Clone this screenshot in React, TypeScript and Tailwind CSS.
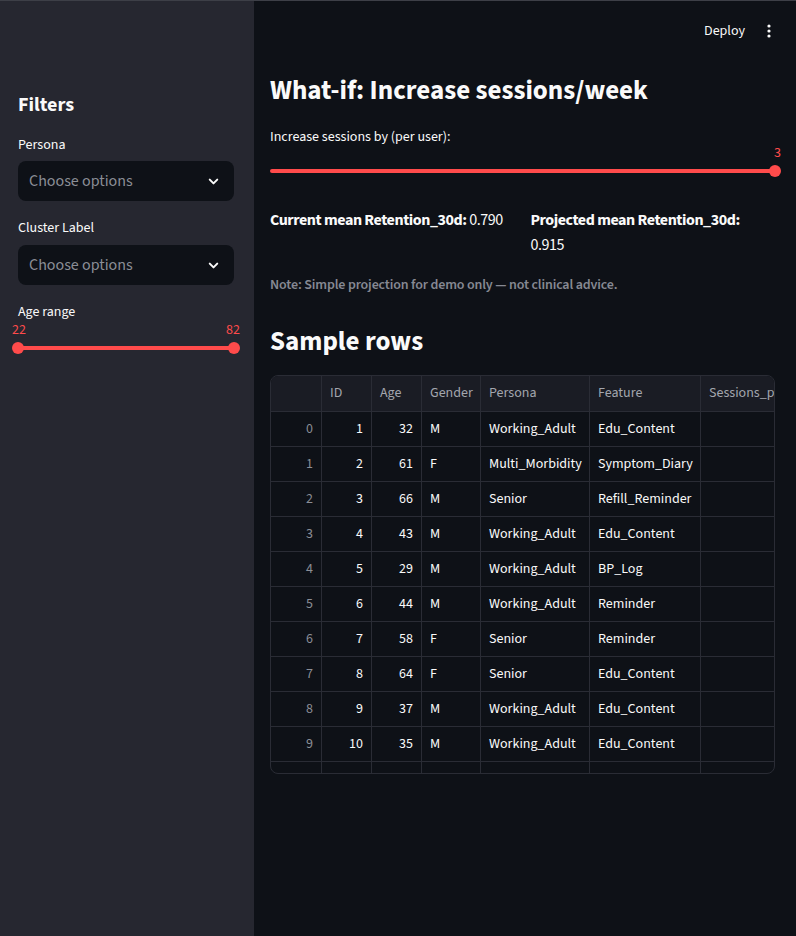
import React from "react";

const rows = [
  [0, 1, 32, "M", "Working_Adult", "Edu_Content"],
  [1, 2, 61, "F", "Multi_Morbidity", "Symptom_Diary"],
  [2, 3, 66, "M", "Senior", "Refill_Reminder"],
  [3, 4, 43, "M", "Working_Adult", "Edu_Content"],
  [4, 5, 29, "M", "Working_Adult", "BP_Log"],
  [5, 6, 44, "M", "Working_Adult", "Reminder"],
  [6, 7, 58, "F", "Senior", "Reminder"],
  [7, 8, 64, "F", "Senior", "Edu_Content"],
  [8, 9, 37, "M", "Working_Adult", "Edu_Content"],
  [9, 10, 35, "M", "Working_Adult", "Edu_Content"],
];

const cols = "grid grid-cols-[51px_50px_50px_59px_109px_111px_1fr]";

function Select() {
  return (
    <div className="h-10 rounded-lg bg-[#0e1117] flex items-center justify-between pl-[11px] pr-[13px]">
      <span className="text-[16px] text-[#8b8e96]">Choose options</span>
      <svg width="15" height="15" viewBox="0 0 24 24" fill="none" stroke="#fafafa" strokeWidth="3.2" strokeLinecap="round" strokeLinejoin="round">
        <path d="M6 9l6 6 6-6" />
      </svg>
    </div>
  );
}

export default function App() {
  return (
    <div className="w-[796px] h-[936px] flex bg-[#0e1117] text-[#fafafa] border-t border-[#3d3f47] overflow-hidden" style={{ fontFamily: "'Source Sans 3', Lato, 'Noto Sans', sans-serif" }}>
      {/* Sidebar */}
      <div className="w-[254px] shrink-0 bg-[#262730] pl-[18px] pr-[20px] pt-[91px]">
        <div className="text-[20px] font-bold leading-[26px]">Filters</div>
        <div className="mt-[18px] text-[14px] leading-[18px]">Persona</div>
        <div className="mt-[7px]"><Select /></div>
        <div className="mt-[18px] text-[14px] leading-[18px]">Cluster Label</div>
        <div className="mt-[8px]"><Select /></div>
        <div className="mt-[18px] text-[14px] leading-[18px]">Age range</div>
        <div className="relative h-[36px]">
          <span className="absolute left-[-6px] top-[1px] text-[14px] leading-[16px] text-[#ff4b4b]">22</span>
          <span className="absolute right-[-6px] top-[1px] text-[14px] leading-[16px] text-[#ff4b4b]">82</span>
          <div className="absolute left-0 right-0 top-[25px] h-1 rounded bg-[#ff4b4b]" />
          <div className="absolute left-[-6px] top-[21px] w-3 h-3 rounded-full bg-[#ff4b4b]" />
          <div className="absolute right-[-6px] top-[21px] w-3 h-3 rounded-full bg-[#ff4b4b]" />
        </div>
      </div>

      {/* Main */}
      <div className="flex-1 pl-[16px] pr-[21px]">
        <div className="h-[60px] flex items-center justify-end gap-[22px]">
          <span className="text-[14px]">Deploy</span>
          <svg width="4" height="14" viewBox="0 0 4 14" fill="#fafafa" className="mr-[4px]">
            <circle cx="2" cy="2" r="1.6" />
            <circle cx="2" cy="7" r="1.6" />
            <circle cx="2" cy="12" r="1.6" />
          </svg>
        </div>
        <h2 className="mt-[12px] text-[27px] font-bold leading-[36px]">What-if: Increase sessions/week</h2>
        <div className="mt-[19px] text-[14px] leading-[18px]">Increase sessions by (per user):</div>
        <div className="relative h-[30px] mt-[2px]">
          <span className="absolute right-[-6px] top-[-3px] text-[14px] leading-[16px] text-[#ff4b4b]">3</span>
          <div className="absolute left-0 right-0 top-[21px] h-1 rounded bg-[#ff4b4b]" />
          <div className="absolute right-[-6px] top-[17px] w-3 h-3 rounded-full bg-[#ff4b4b]" />
        </div>
        <div className="mt-[30px] grid grid-cols-2 gap-4 text-[16px] leading-[25px] tracking-[-0.45px]">
          <div><span className="font-bold">Current mean Retention_30d:</span> 0.790</div>
          <div><span className="font-bold">Projected mean Retention_30d:</span> 0.915</div>
        </div>
        <div className="mt-[17px] text-[14px] leading-[20px] font-semibold text-[#868993] tracking-[-0.15px]">Note: Simple projection for demo only — not clinical advice.</div>
        <h2 className="mt-[29px] text-[27px] font-bold leading-[36px]">Sample rows</h2>
        <div className="mt-[15px] rounded-lg border border-[#2a2c35] overflow-hidden text-[14px]">
          <div className={`${cols} h-[35px] bg-[#1a1c24] text-[#a3a6ae]`}>
            <div className="border-r border-[#2a2c35]" />
            {["ID", "Age", "Gender", "Persona", "Feature", "Sessions_p"].map((h, i) => (
              <div key={h} className={`flex items-center px-2 whitespace-nowrap overflow-hidden ${i < 5 ? "border-r border-[#2a2c35]" : ""}`}>{h}</div>
            ))}
          </div>
          {rows.map((r) => (
            <div key={r[0]} className={`${cols} h-[35px] border-t border-[#2a2c35]`}>
              <div className="flex items-center justify-end px-2 text-[#8b8e96] border-r border-[#2a2c35]">{r[0]}</div>
              <div className="flex items-center justify-end px-2 border-r border-[#2a2c35]">{r[1]}</div>
              <div className="flex items-center justify-end px-2 border-r border-[#2a2c35]">{r[2]}</div>
              <div className="flex items-center px-2 border-r border-[#2a2c35]">{r[3]}</div>
              <div className="flex items-center px-2 border-r border-[#2a2c35]">{r[4]}</div>
              <div className="flex items-center px-2 border-r border-[#2a2c35]">{r[5]}</div>
              <div />
            </div>
          ))}
          <div className={`${cols} h-[12px] border-t border-[#2a2c35]`}>
            {[0, 1, 2, 3, 4, 5].map((i) => (
              <div key={i} className="border-r border-[#2a2c35]" />
            ))}
            <div />
          </div>
        </div>
      </div>
    </div>
  );
}
